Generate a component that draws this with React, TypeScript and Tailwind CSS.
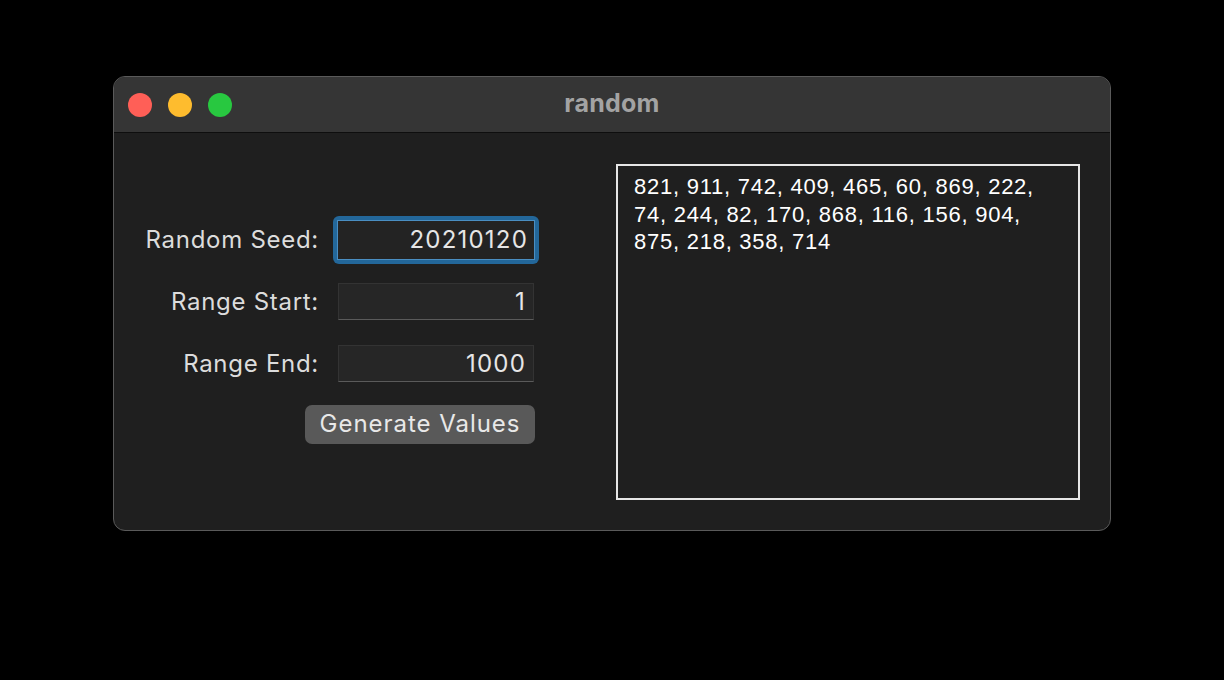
export default function App() {
  const values =
    "821, 911, 742, 409, 465, 60, 869, 222, 74, 244, 82, 170, 868, 116, 156, 904, 875, 218, 358, 714";

  return (
    <div className="w-[1224px] h-[680px] bg-black pt-[76px] pl-[113px]" style={{ fontFamily: "Inter, 'Noto Sans', sans-serif" }}>
      <div className="w-[998px] h-[455px] rounded-[12px] border border-[#5a5a5a] overflow-hidden flex flex-col bg-[#1f1f1f]">
        {/* Title bar */}
        <div className="h-[56px] shrink-0 bg-[#353535] border-b border-[#0e0e0e] flex items-center relative">
          <div className="flex gap-[16px] pl-[14px]">
            <span className="w-[24px] h-[24px] rounded-full bg-[#ff5f57]"></span>
            <span className="w-[24px] h-[24px] rounded-full bg-[#febc2e]"></span>
            <span className="w-[24px] h-[24px] rounded-full bg-[#28c840]"></span>
          </div>
          <div className="absolute inset-0 flex items-center justify-center text-[25px] tracking-[0.01em] font-bold text-[#a3a3a3] pointer-events-none pb-[2px]">
            random
          </div>
        </div>

        {/* Body */}
        <div className="flex flex-1">
          {/* Form */}
          <div className="w-[428px] shrink-0 pt-[83px] flex flex-col items-end text-[24px] tracking-[0.03em] text-[#dcdcdc]">
            <div className="flex items-center h-[48px] mr-[3px]">
              <span className="mr-[14px]">Random Seed:</span>
              <div className="w-[206px] h-[48px] rounded-[6px] bg-[#23679a] p-[4px]">
                <div className="w-full h-full bg-[#232323] border border-[#4a8ec2] flex items-center justify-end pr-[6px] text-[#e6e6e6] tracking-[0.05em]">
                  20210120
                </div>
              </div>
            </div>
            <div className="flex items-center h-[37px] mt-[19px] mr-[8px]">
              <span className="mr-[19px]">Range Start:</span>
              <div className="w-[196px] h-[37px] bg-[#262626] border border-[#333] border-b-[#5a5a5a] flex items-center justify-end pr-[7px] text-[#e6e6e6] tracking-[0.05em]">
                1
              </div>
            </div>
            <div className="flex items-center h-[37px] mt-[25px] mr-[8px]">
              <span className="mr-[19px]">Range End:</span>
              <div className="w-[196px] h-[37px] bg-[#262626] border border-[#333] border-b-[#5a5a5a] flex items-center justify-end pr-[7px] text-[#e6e6e6] tracking-[0.05em]">
                1000
              </div>
            </div>
            <button className="mt-[23px] mr-[7px] w-[230px] h-[39px] rounded-[7px] bg-[#595959] text-[#e8e8e8] text-[24px] tracking-[0.04em] leading-none pb-[2px]">
              Generate Values
            </button>
          </div>

          {/* Output */}
          <div className="pl-[74px] pt-[31px]">
            <div
              className="w-[464px] h-[336px] border-2 border-[#e6e6e6] pl-[16px] pr-[24px] pt-[7px] text-[22px] tracking-[0.75px] leading-[27.5px] text-white"
              style={{ fontFamily: "'Liberation Sans', Arial, sans-serif" }}
            >
              {values}
            </div>
          </div>
        </div>
      </div>
    </div>
  );
}
